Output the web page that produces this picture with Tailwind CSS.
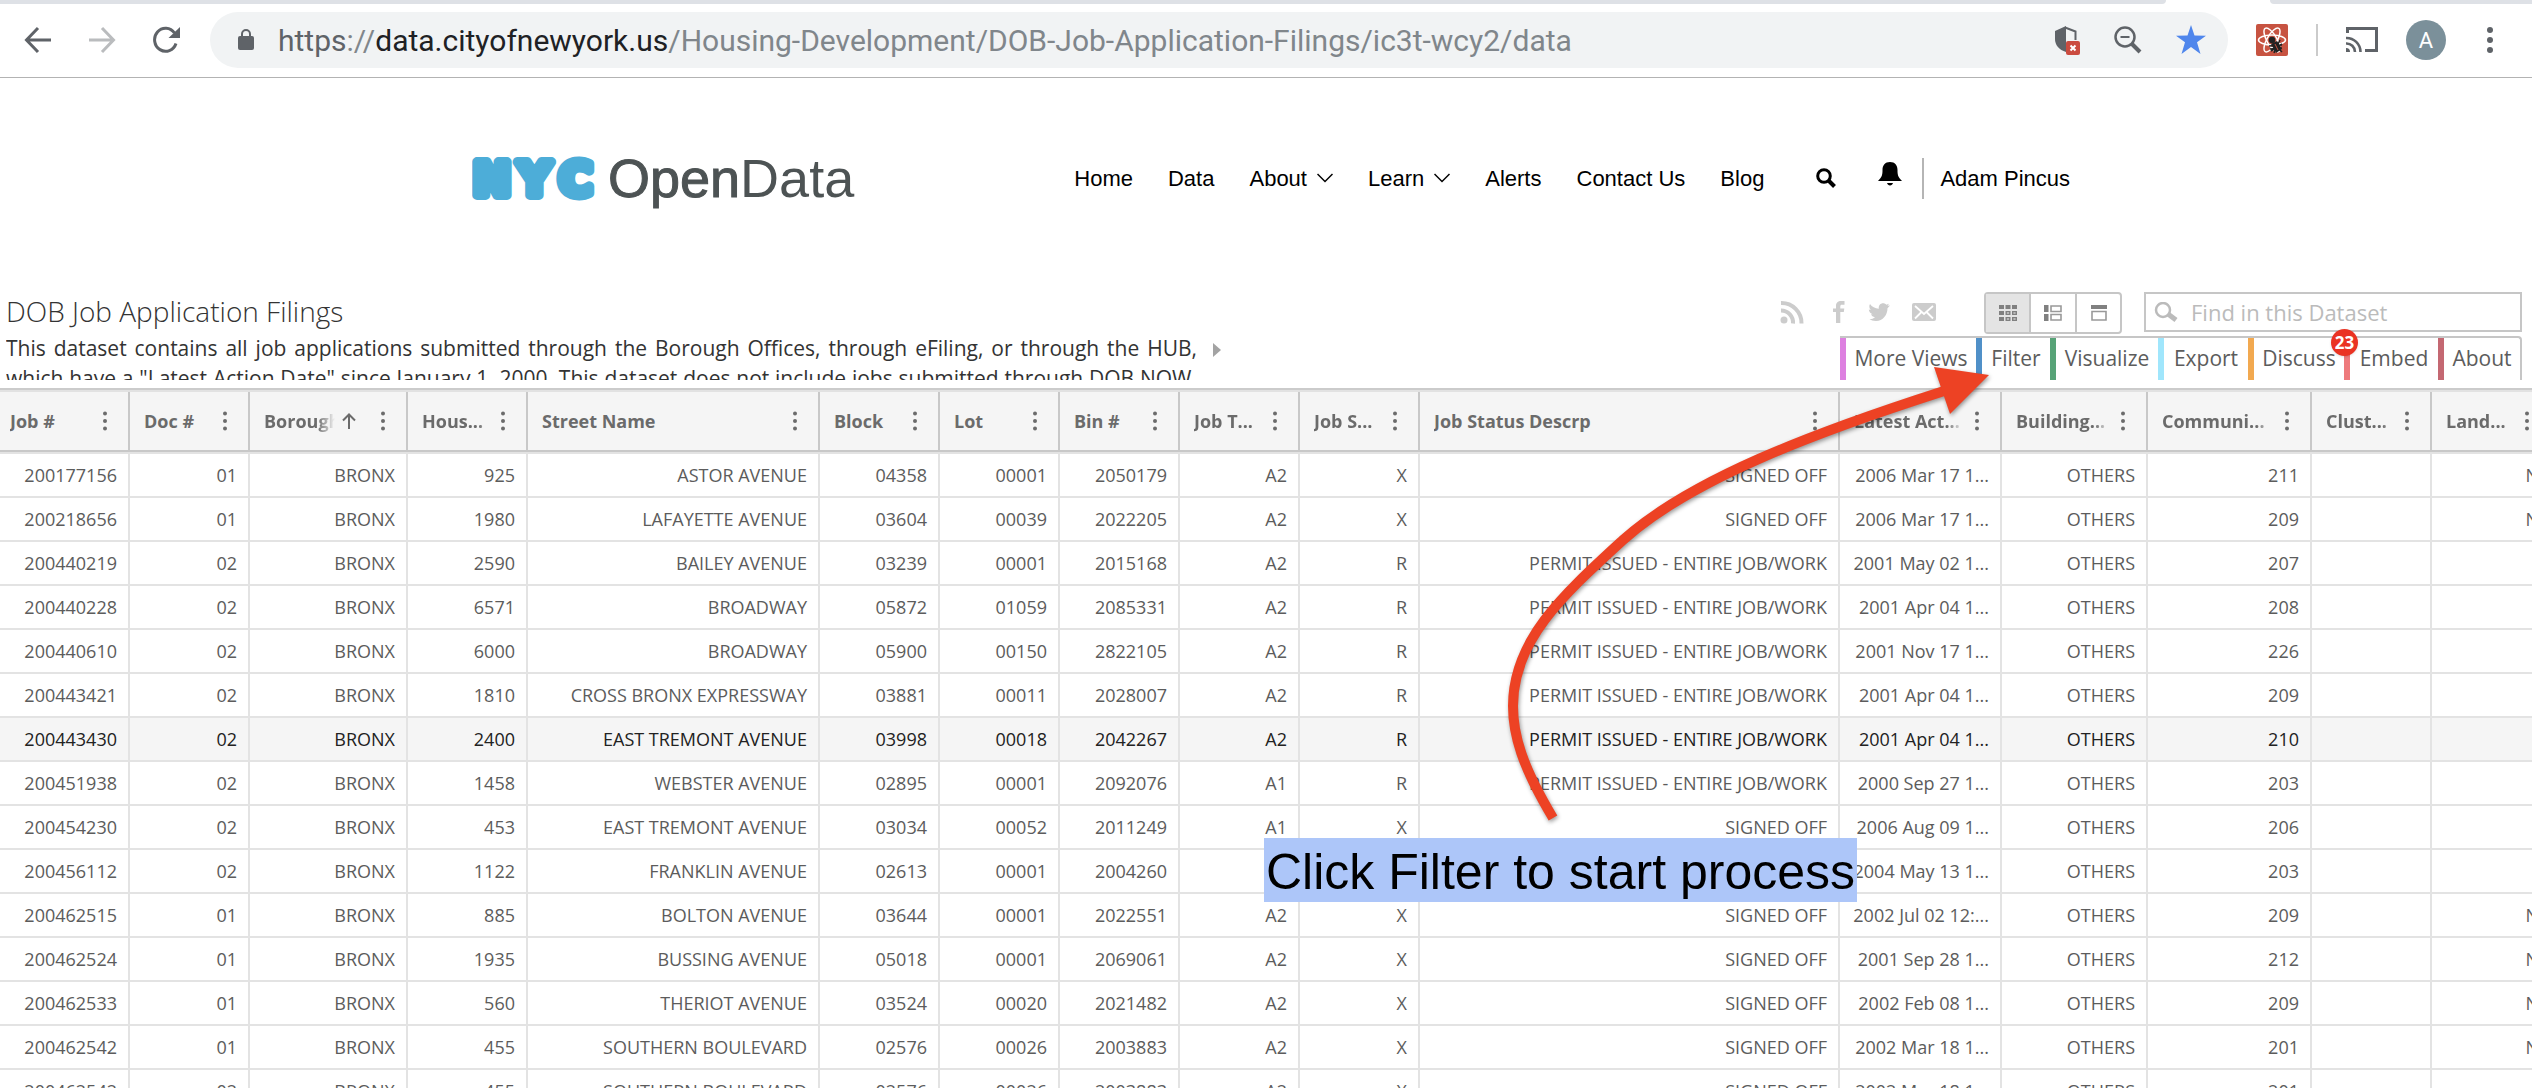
<!DOCTYPE html>
<html lang="en">
<head>
    <meta charset="UTF-8">
    <meta name="viewport" content="width=device-width, initial-scale=1.0">
    <title>DOB Job Application Filings | NYC Open Data</title>
    <script src="https://cdn.jsdelivr.net/npm/@tailwindcss/browser@4"></script>
    <script>
        document.addEventListener("DOMContentLoaded", () => {
            const columns = [
                { name: "Job #", width: 130 },
                { name: "Doc #", width: 120 },
                { name: "Borough", width: 158, sorted: true },
                { name: "Hous...", width: 120 },
                { name: "Street Name", width: 292 },
                { name: "Block", width: 120 },
                { name: "Lot", width: 120 },
                { name: "Bin #", width: 120 },
                { name: "Job T...", width: 120 },
                { name: "Job S...", width: 120 },
                { name: "Job Status Descrp", width: 420 },
                { name: "Latest Act...", width: 162 },
                { name: "Building...", width: 146 },
                { name: "Communi...", width: 164 },
                { name: "Clust...", width: 120 },
                { name: "Land...", width: 120 }
            ];

            const SIGNED = "SIGNED OFF";
            const PERMIT = "PERMIT ISSUED - ENTIRE JOB/WORK";
            const rows = [
                ["200177156", "01", "BRONX", "925", "ASTOR AVENUE", "04358", "00001", "2050179", "A2", "X", SIGNED, "2006 Mar 17 1...", "OTHERS", "211", "", "N"],
                ["200218656", "01", "BRONX", "1980", "LAFAYETTE AVENUE", "03604", "00039", "2022205", "A2", "X", SIGNED, "2006 Mar 17 1...", "OTHERS", "209", "", "N"],
                ["200440219", "02", "BRONX", "2590", "BAILEY AVENUE", "03239", "00001", "2015168", "A2", "R", PERMIT, "2001 May 02 1...", "OTHERS", "207", "", ""],
                ["200440228", "02", "BRONX", "6571", "BROADWAY", "05872", "01059", "2085331", "A2", "R", PERMIT, "2001 Apr 04 1...", "OTHERS", "208", "", ""],
                ["200440610", "02", "BRONX", "6000", "BROADWAY", "05900", "00150", "2822105", "A2", "R", PERMIT, "2001 Nov 17 1...", "OTHERS", "226", "", ""],
                ["200443421", "02", "BRONX", "1810", "CROSS BRONX EXPRESSWAY", "03881", "00011", "2028007", "A2", "R", PERMIT, "2001 Apr 04 1...", "OTHERS", "209", "", ""],
                ["200443430", "02", "BRONX", "2400", "EAST TREMONT AVENUE", "03998", "00018", "2042267", "A2", "R", PERMIT, "2001 Apr 04 1...", "OTHERS", "210", "", ""],
                ["200451938", "02", "BRONX", "1458", "WEBSTER AVENUE", "02895", "00001", "2092076", "A1", "R", PERMIT, "2000 Sep 27 1...", "OTHERS", "203", "", ""],
                ["200454230", "02", "BRONX", "453", "EAST TREMONT AVENUE", "03034", "00052", "2011249", "A1", "X", SIGNED, "2006 Aug 09 1...", "OTHERS", "206", "", ""],
                ["200456112", "02", "BRONX", "1122", "FRANKLIN AVENUE", "02613", "00001", "2004260", "A2", "X", SIGNED, "2004 May 13 1...", "OTHERS", "203", "", ""],
                ["200462515", "01", "BRONX", "885", "BOLTON AVENUE", "03644", "00001", "2022551", "A2", "X", SIGNED, "2002 Jul 02 12:...", "OTHERS", "209", "", "N"],
                ["200462524", "01", "BRONX", "1935", "BUSSING AVENUE", "05018", "00001", "2069061", "A2", "X", SIGNED, "2001 Sep 28 1...", "OTHERS", "212", "", "N"],
                ["200462533", "01", "BRONX", "560", "THERIOT AVENUE", "03524", "00020", "2021482", "A2", "X", SIGNED, "2002 Feb 08 1...", "OTHERS", "209", "", "N"],
                ["200462542", "01", "BRONX", "455", "SOUTHERN BOULEVARD", "02576", "00026", "2003883", "A2", "X", SIGNED, "2002 Mar 18 1...", "OTHERS", "201", "", "N"],
                ["200462542", "02", "BRONX", "455", "SOUTHERN BOULEVARD", "02576", "00026", "2003883", "A2", "X", SIGNED, "2002 Mar 18 1...", "OTHERS", "201", "", ""]
            ];
            const activeRow = 6;

            const sortArrow = `<svg class="w-4 h-4 mr-6 shrink-0" viewBox="0 0 16 16" fill="none" stroke="#6b6b6b" stroke-width="2"><path d="M8 16V2M2 7.500l6-6 6 6"/></svg>`;
            const dots = `<svg class="w-1 h-5 shrink-0" viewBox="0 0 4 20" fill="#6b6b6b"><circle cx="2" cy="2.500" r="2"/><circle cx="2" cy="10" r="2"/><circle cx="2" cy="17.500" r="2"/></svg>`;

            const colgroup = document.getElementById("grid-cols");
            const head = document.getElementById("grid-head");
            columns.forEach((column, i) => {
                const col = document.createElement("col");
                col.style.width = `${column.width}px`;
                colgroup.appendChild(col);

                let label = "mr-3";
                if (column.name.endsWith("...")) label = "mr-3 mask-r-from-85% mask-r-to-100%";
                if (column.sorted) label = "mr-1.5 mask-r-from-75% mask-r-to-100%";
                const th = document.createElement("th");
                th.scope = "col";
                th.className = "p-0 border-r-2 border-[#c8c8c8] font-bold text-left";
                th.innerHTML = `
                    <div class="flex items-center h-[58px] pr-[21px] ${i === 0 ? "pl-2.5" : "pl-3.5"}">
                        <span class="flex-1 min-w-0 overflow-hidden whitespace-nowrap ${label}">${column.name}</span>
                        ${column.sorted ? sortArrow : ""}
                        <button type="button" class="flex" aria-label="${column.name} menu">${dots}</button>
                    </div>`;
                head.appendChild(th);
            });

            const body = document.getElementById("grid-body");
            rows.forEach((row, i) => {
                const tr = document.createElement("tr");
                tr.className = i === activeRow ? "h-11 bg-[#f5f5f5] text-[#222]" : "h-11";
                row.forEach((value) => {
                    const td = document.createElement("td");
                    td.className = "py-0 pl-2 pr-[11px] border-r-2 border-b-2 border-[#e3e3e3] text-right whitespace-nowrap overflow-hidden";
                    td.textContent = value;
                    tr.appendChild(td);
                });
                body.appendChild(tr);
            });
        });
    </script>
</head>
<body class="relative h-screen overflow-hidden bg-white font-['Open_Sans',sans-serif] text-[#333]">

    <!-- Browser toolbar -->
    <div class="flex justify-between h-1 bg-white">
        <div class="w-[2166px] bg-[#dee1e6] rounded-br-lg"></div>
        <div class="w-[262px] bg-[#dee1e6] rounded-bl-lg"></div>
    </div>
    <div class="flex items-center h-[74px] pl-6 pr-8 pb-[1px] border-b border-[#b3b3b3]">
        <button type="button" aria-label="Back"><svg class="w-7 h-7" viewBox="0 0 28 28" fill="none" stroke="#5f6368" stroke-width="3"><path d="M27 14H3M14 2L2.500 14 14 26"/></svg></button>
        <button type="button" aria-label="Forward" class="ml-9"><svg class="w-7 h-7" viewBox="0 0 28 28" fill="none" stroke="#babcbe" stroke-width="3"><path d="M1 14h24M14 2l11.500 12L14 26"/></svg></button>
        <button type="button" aria-label="Reload" class="ml-9"><svg class="w-7 h-7" viewBox="0 0 28 28"><path d="M24 17.500A11 11.500 0 1 1 22.500 7" fill="none" stroke="#5f6368" stroke-width="3"/><path d="M28 1v11H16.500z" fill="#5f6368"/></svg></button>
        <div class="flex items-center flex-1 h-14 ml-[30px] pl-7 pr-[22px] rounded-full bg-[#f1f3f4]">
            <svg class="w-4 h-[22px]" viewBox="0 0 16 22"><rect y="7" width="16" height="14" rx="2" fill="#5f6368"/><path d="M4 8V5a4 4 0 0 1 8 0v3" fill="none" stroke="#5f6368" stroke-width="2"/></svg>
            <div role="textbox" aria-label="Address" class="flex-1 ml-6 font-['Roboto',sans-serif] text-[30px] text-[#80868b] whitespace-nowrap"><span class="text-[#5f6368]">https</span>://<span class="text-[#202124]">data.cityofnewyork.us</span>/Housing-Development/DOB-Job-Application-Filings/ic3t-wcy2/data</div>
            <svg class="w-7 h-8" viewBox="0 0 28 32"><path d="M12 2L1 7v8c0 6 4 11 11 13z" fill="#5f6368"/><path d="M11 3.500l10.500 4V16" fill="none" stroke="#5f6368" stroke-width="2"/><rect x="12" y="17" width="14" height="14" rx="2" fill="#cb4b3f"/><path d="M16.500 21.500l5 5M21.500 21.500l-5 5" stroke="#fff" stroke-width="2"/></svg>
            <svg class="w-7 h-7 ml-8" viewBox="0 0 28 28" fill="none" stroke="#5f6368"><circle cx="11" cy="11" r="9.500" stroke-width="2.500"/><path d="M6.500 11h9" stroke-width="2"/><path d="M18 18l8 8" stroke-width="4"/></svg>
            <svg class="w-[30px] h-[30px] ml-[34px]" viewBox="0 0 30 30"><path d="M15 0l3.500 10.500 11.500.2-9 6.600L24.500 29 15 22 5.500 29 9 17.300 0 10.700l11.500-.2z" fill="#4f86ec"/></svg>
        </div>
        <svg class="w-8 h-8 ml-7" viewBox="0 0 32 32" fill="none"><rect width="32" height="32" rx="2" fill="#c75341"/><g stroke="#fff" stroke-width="1.500"><ellipse cx="16" cy="16" rx="13.500" ry="5"/><ellipse cx="16" cy="16" rx="13.500" ry="5" transform="rotate(60 16 16)"/><ellipse cx="16" cy="16" rx="13.500" ry="5" transform="rotate(120 16 16)"/></g><circle cx="16" cy="16" r="3.200" fill="#222"/><path d="M15 20l6-3 5 8-6 4z" fill="#222"/><path d="M13 22l13-1M15 27l11-7M14 25l12-1M24 16l-2 4M26 28l-3-3M18 29l1-3" stroke="#222" stroke-width="1.500"/><path d="M19 20l3 6" stroke="#c75341"/></svg>
        <div class="w-0.5 h-8 ml-7 bg-[#cbcbcb]"></div>
        <svg class="w-8 h-7 ml-7" viewBox="0 0 32 28" fill="none" stroke="#5f6368" stroke-width="3"><path d="M1.500 7V2.500h29v22H19"/><path d="M0 12a14 14 0 0 1 14.500 14M0 17.500A8.500 8.500 0 0 1 9 26" stroke-width="2.600"/><path d="M0 22v4h4a4 4 0 0 0-4-4z" fill="#5f6368" stroke="none"/></svg>
        <div class="flex items-center justify-center w-10 h-10 ml-7 rounded-full bg-[#7b909a] text-white text-[22px] font-['Roboto',sans-serif]">A</div>
        <button type="button" aria-label="Browser menu" class="ml-10"><svg class="w-[14px] h-7" viewBox="0 0 14 28" fill="#5f6368"><circle cx="4" cy="4" r="3"/><circle cx="4" cy="14" r="3"/><circle cx="4" cy="24" r="3"/></svg></button>
    </div>

    <!-- Site header -->
    <header class="flex items-center justify-between w-[1612px] h-[200px] mx-auto pl-3 text-black font-['Liberation_Sans',Arial,sans-serif]">
        <a href="#" class="flex items-center" aria-label="NYC OpenData">
            <svg class="w-[130px] h-12" viewBox="0 0 130 48" font-family="DejaVu Sans" font-weight="700" font-size="45" fill="#4dadd8" stroke="#4dadd8" stroke-width="10" stroke-linejoin="round"><text x="1" y="41">N</text><text x="46" y="41">Y</text><text x="87" y="41">C</text></svg>
            <span class="ml-1.5 text-[54px] leading-[60px] text-[#4d5354]"><span class="[-webkit-text-stroke:1px_#4d5354]">Open</span>Data</span>
        </a>
        <nav class="flex items-center pr-0.5 text-[22px]">
            <a href="#">Home</a>
            <a href="#" class="ml-[35px]">Data</a>
            <a href="#" class="flex items-center ml-[35px]">About <svg class="w-4 h-2.5 ml-2.5" viewBox="0 0 16 10" fill="none" stroke="#000" stroke-width="1.500"><path d="M.5 1L8 8.500 15.500 1"/></svg></a>
            <a href="#" class="flex items-center ml-[35px]">Learn <svg class="w-4 h-2.5 ml-2.5" viewBox="0 0 16 10" fill="none" stroke="#000" stroke-width="1.500"><path d="M.5 1L8 8.500 15.500 1"/></svg></a>
            <a href="#" class="ml-[35px]">Alerts</a>
            <a href="#" class="ml-[35px]">Contact Us</a>
            <a href="#" class="ml-[35px]">Blog</a>
            <button type="button" aria-label="Search" class="ml-[52px]"><svg class="w-5 h-5" viewBox="0 0 20 20" fill="none" stroke="#000"><circle cx="8" cy="8" r="6.300" stroke-width="3"/><path d="M12.500 12.500l6 6" stroke-width="4"/></svg></button>
            <button type="button" aria-label="Notifications" class="ml-[42px] mb-2"><svg class="w-6 h-6" viewBox="0 0 24 24"><path d="M12 0c5 0 7.500 3.500 7.500 8 0 5 .5 7 4.500 11H0c4-4 4.500-6 4.500-11C4.500 3.500 7 0 12 0zM9 21h6c-.5 1.500-1.500 2.500-3 2.500S9.500 22.500 9 21z"/></svg></button>
            <a href="#" class="ml-5 pl-4 py-1 border-l-2 border-[#b5b5b5]">Adam Pincus</a>
        </nav>
    </header>

    <!-- Dataset title, share links and view tools -->
    <section class="flex justify-between h-[110px] pl-[6px] pr-[10px]">
        <div class="pt-3">
            <h1 class="text-[28px] leading-[42px] font-light">DOB Job Application Filings</h1>
            <div class="flex">
                <p class="w-[1191px] h-12 pt-[1px] overflow-hidden text-[21px] leading-[30px] text-justify [text-align-last:justify]">This dataset contains all job applications submitted through the Borough Offices, through eFiling, or through the HUB,<br>which have a "Latest Action Date" since January 1, 2000. This dataset does not include jobs submitted through DOB NOW.</p>
                <button type="button" aria-label="Expand description" class="self-start mt-[11px] ml-4"><svg class="w-2 h-[14px]" viewBox="0 0 8 14" fill="#a3a3a3"><path d="M0 0l8 7-8 7z"/></svg></button>
            </div>
        </div>
        <div class="pt-[14px] text-[21px] text-[#5c5c5c]">
            <div class="flex h-11 justify-end">
                <div class="flex h-10 mr-12 items-center">
                    <a href="#" aria-label="RSS"><svg class="w-6 h-6" viewBox="0 0 24 24" fill="none" stroke="#ccc" stroke-width="4"><circle cx="4" cy="20" r="3.500" fill="#ccc" stroke="none"/><path d="M1 10.500A12 12 0 0 1 13 23.500M1 3A20 20 0 0 1 21.500 23.500"/></svg></a>
                    <a href="#" aria-label="Facebook" class="ml-7"><svg class="w-[14px] h-[22px]" viewBox="0 0 14 22"><path d="M4 22V11H1V7.500h3V5c0-3.500 2-5 5-5h3.500v3.800H10c-1.300 0-1.700.5-1.700 1.700v2h4L11.800 11H8.300v11z" fill="#ccc"/></svg></a>
                    <a href="#" aria-label="Twitter" class="ml-[22px]"><svg class="w-[22px] h-[18px]" viewBox="0 0 22 18"><path d="M22 2.500l-2.500 2.800C19.500 12 15 18 8 18c-3 0-5-.8-6.500-2 2.500 0 4-.5 5.500-1.800-2-.3-3.500-1.500-4-3h1.800C2.500 10.500 1 8.800.8 6.500l2 .5C1.200 5.300.8 3 2 1c2 2.800 5 4.500 8.800 4.800C10.300 2.500 12.500.3 15 .3c1.500 0 2.600.6 3.300 1.400L21 .7l-1.500 2.100z" fill="#ccc"/></svg></a>
                    <a href="#" aria-label="Email" class="ml-[22px]"><svg class="w-6 h-[18px]" viewBox="0 0 24 18"><rect width="24" height="18" rx="2" fill="#ccc"/><path d="M3 3l9 8 9-8M3 15.500L9 9.500M21 15.500L15 9.500" fill="none" stroke="#fff" stroke-width="1.800"/></svg></a>
                </div>
                <div class="flex h-[42px] mr-[22px] border-2 border-[#c6c6c6] rounded-sm divide-x-2 divide-[#c6c6c6]">
                    <button type="button" aria-label="Table view" class="flex items-center justify-center w-[45px] bg-[#e4e4e4]"><svg class="w-[18px] h-4" viewBox="0 0 18 16" fill="#808080"><path d="M0 0h5v4H0zM6.500 0h5v4h-5zM13 0h5v4h-5zM0 6h5v4H0zM0 12h5v4H0z"/><path d="M7.200 6.700h3.600v2.600H7.200zM13.700 6.700h3.600v2.600h-3.600zM7.200 12.700h3.600v2.600H7.200zM13.700 12.700h3.600v2.600h-3.600z" fill="#eee" stroke="#808080" stroke-width="1.400"/></svg></button>
                    <button type="button" aria-label="Rich list view" class="flex items-center justify-center w-[46px]"><svg class="w-[18px] h-4" viewBox="0 0 18 16" fill="#808080"><path d="M0 0h4.500v7H0zM0 9h4.500v7H0z"/><path d="M7 1h10v5.500H7zM7 9.500h10V15H7z" fill="none" stroke="#999" stroke-width="1.600"/></svg></button>
                    <button type="button" aria-label="Single row view" class="flex items-center justify-center w-[43px]"><svg class="w-4 h-4" viewBox="0 0 16 16"><path d="M0 0h16v4H0z" fill="#808080"/><path d="M1 6.500h14V15H1z" fill="none" stroke="#999" stroke-width="1.600"/></svg></button>
                </div>
                <label class="flex items-center w-[378px] h-10 pl-2 border-2 border-[#c6c6c6] text-[22px]">
                    <svg class="w-6 h-5" viewBox="0 0 24 20" fill="none" stroke="#bbb"><circle cx="9" cy="8" r="7" stroke-width="2.500"/><path d="M14 12l8 6" stroke-width="5"/></svg>
                    <input type="text" aria-label="Find in this Dataset" placeholder="Find in this Dataset" class="flex-1 min-w-0 ml-[13px] outline-none placeholder:text-[#bbb]">
                </label>
            </div>
            <div class="flex w-[682px] h-11 ml-auto border-t-2 border-r-2 border-[#c6c6c6] rounded-tr-sm leading-10">
                <button type="button" class="w-[136px] pb-0.5 border-l-6 border-[#dd80e0] text-center">More Views</button>
                <button type="button" class="w-[74px] pb-0.5 border-l-6 border-[#5090c8] text-center">Filter</button>
                <button type="button" class="w-[108px] pb-0.5 border-l-6 border-[#57a377] text-center">Visualize</button>
                <button type="button" class="w-[90px] pb-0.5 border-l-6 border-[#a0e6fc] text-center">Export</button>
                <button type="button" class="relative w-24 pb-0.5 border-l-6 border-[#f2a950] text-center">Discuss<span class="absolute -top-[9px] -right-[14px] z-10 w-[27px] h-[27px] rounded-full bg-[#ea3323] text-white text-[17px] leading-[27px] font-bold shadow">23</span></button>
                <button type="button" class="w-[94px] pb-0.5 border-l-6 border-[#ee7a7c] text-center">Embed</button>
                <button type="button" class="w-[82px] pb-0.5 border-l-6 border-[#c46872] text-center">About</button>
            </div>
        </div>
    </section>

    <!-- Data grid -->
    <div class="overflow-hidden border-t-2 border-[#cbcbcb]">
        <table class="w-[2552px] table-fixed border-separate border-spacing-0 border-t-2 border-[#e2e2e2] text-[18px] leading-6 text-[#5c5c5c]">
            <colgroup id="grid-cols"></colgroup>
            <thead class="bg-[#f5f5f5] text-[#6b6b6b]">
                <tr id="grid-head"></tr>
                <tr><td colspan="16" class="h-1 p-0 border-t-2 border-[#c8c8c8] bg-[#e3e3e3]"></td></tr>
            </thead>
            <tbody id="grid-body"></tbody>
        </table>
    </div>

    <!-- Annotation laid over the page -->
    <svg class="absolute left-[1500px] top-[360px] w-[500px] h-[470px] drop-shadow-[1px_2px_2px_rgba(0,0,0,0.4)]" viewBox="1500 360 500 470">
        <path d="M1553 818C1522 766 1513 735 1513 706C1513 640 1563 595 1623 540C1690 480 1810 434 1944 391" fill="none" stroke="#ed4224" stroke-width="10"/>
        <path d="M1989 375L1934 367L1950 414z" fill="#ed4224"/>
    </svg>
    <div class="absolute left-[1264px] top-[838px] px-0.5 pt-1 bg-[#adc6f9] text-black text-[50px] leading-[60px] whitespace-nowrap font-['Liberation_Sans',Arial,sans-serif]">Click Filter to start process</div>
</body>
</html>
